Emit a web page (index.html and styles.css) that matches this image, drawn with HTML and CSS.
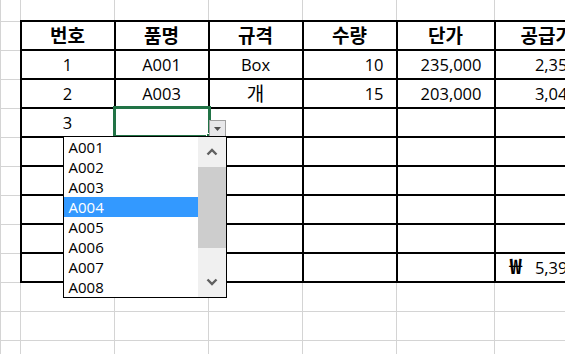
FILE: index.html
```html
<!DOCTYPE html>
<html lang="ko">
<head>
<meta charset="utf-8">
<title>거래명세</title>
<link rel="stylesheet" href="styles.css">
</head>
<body>

<table class="sheet">
	<colgroup>
		<col class="c-a">
		<col class="c-n"><col class="c-n"><col class="c-n"><col class="c-n">
		<col class="c-f">
		<col class="c-g">
	</colgroup>
	<tr class="top"><td></td><td></td><td></td><td></td><td></td><td></td><td></td></tr>
	<tr>
		<td></td>
		<th>번호</th><th>품명</th><th>규격</th><th>수량</th><th>단가</th><th>공급가액</th>
	</tr>
	<tr>
		<td></td>
		<td class="t c">1</td><td class="t c">A001</td><td class="t c">Box</td>
		<td class="t r">10</td><td class="t r">235,000</td><td class="t r g">2,350,000</td>
	</tr>
	<tr>
		<td></td>
		<td class="t c">2</td><td class="t c">A003</td><td class="t c ko">개</td>
		<td class="t r">15</td><td class="t r">203,000</td><td class="t r g">3,045,000</td>
	</tr>
	<tr>
		<td></td>
		<td class="t c">3</td>
		<td class="t active">
			<div class="sel"><span class="handle"></span></div>
			<div class="dd-btn">
				<svg width="7" height="4" viewBox="0 0 7 4"><path d="M0 0h7L3.5 4z" fill="#505050"/></svg>
			</div>
			<div class="list">
				<div class="items">
					<div class="item">A001</div>
					<div class="item">A002</div>
					<div class="item">A003</div>
					<div class="item on">A004</div>
					<div class="item">A005</div>
					<div class="item">A006</div>
					<div class="item">A007</div>
					<div class="item">A008</div>
				</div>
				<div class="scroll">
					<div class="arrow">
						<svg width="12" height="8" viewBox="0 0 12 8"><path d="M1.5 6.5L6 2l4.5 4.5" fill="none" stroke="#606060" stroke-width="2.4"/></svg>
					</div>
					<div class="thumb"></div>
					<div class="track"></div>
					<div class="arrow">
						<svg width="12" height="8" viewBox="0 0 12 8"><path d="M1.5 1.5L6 6l4.5-4.5" fill="none" stroke="#606060" stroke-width="2.4"/></svg>
					</div>
				</div>
			</div>
		</td>
		<td class="t"></td><td class="t"></td><td class="t"></td><td class="t"></td>
	</tr>
	<tr><td></td><td class="t"></td><td class="t"></td><td class="t"></td><td class="t"></td><td class="t"></td><td class="t"></td></tr>
	<tr><td></td><td class="t"></td><td class="t"></td><td class="t"></td><td class="t"></td><td class="t"></td><td class="t"></td></tr>
	<tr><td></td><td class="t"></td><td class="t"></td><td class="t"></td><td class="t"></td><td class="t"></td><td class="t"></td></tr>
	<tr><td></td><td class="t"></td><td class="t"></td><td class="t"></td><td class="t"></td><td class="t"></td><td class="t"></td></tr>
	<tr>
		<td></td><td class="t"></td><td class="t"></td><td class="t"></td><td class="t"></td><td class="t"></td>
		<td class="t g total"><div class="acct"><span class="cur">₩</span><span>5,395,000</span></div></td>
	</tr>
	<tr><td></td><td></td><td></td><td></td><td></td><td></td><td></td></tr>
	<tr><td></td><td></td><td></td><td></td><td></td><td></td><td></td></tr>
	<tr><td></td><td></td><td></td><td></td><td></td><td></td><td></td></tr>
</table>

</body>
</html>
```

FILE: styles.css
```css
html, body {
	margin: 0;
	padding: 0;
	overflow: hidden;
	background: #fff;
}

body {
	font: 16.5px "Open Sans", "Noto Sans CJK KR", sans-serif;
	color: #000;
}

.sheet {
	border-collapse: collapse;
	table-layout: fixed;
	width: 616px;
}

.c-a { width: 20px; }
.c-n { width: 94px; }
.c-f { width: 98px; }
.c-g { width: 122px; }

.sheet tr {
	height: 29px;
}

.sheet tr.top {
	height: 21px;
}

.sheet td,
.sheet th {
	border: 1px solid #d4d4d4;
	padding: 0 12px 3px;
	line-height: 20px;
	vertical-align: bottom;
	white-space: nowrap;
}

.sheet .top td {
	border-top: none;
}

.sheet th {
	border: 2px solid #000;
	padding: 0;
	font-size: 19px;
	font-weight: bold;
	text-align: center;
	vertical-align: middle;
}

.sheet td.t {
	border: 2px solid #000;
}

.c { text-align: center; }
.r { text-align: right; }

.sheet td.g {
	padding-right: 6px;
}

.ko {
	font-size: 19px;
}

.sheet td.total {
	padding-left: 14px;
}

.acct {
	display: flex;
	justify-content: space-between;
	align-items: baseline;
}

.cur {
	font-family: "Noto Sans CJK KR", sans-serif;
	font-size: 21px;
	font-weight: bold;
}

/* active cell + validation dropdown */
.active {
	position: relative;
}

.sel {
	position: absolute;
	left: -3px;
	top: -3px;
	right: -3px;
	bottom: -2px;
	border: 3px solid #217346;
}

.handle {
	position: absolute;
	right: -5px;
	bottom: -5px;
	width: 5px;
	height: 5px;
	background: #217346;
	border: 1px solid #fff;
}

.dd-btn {
	position: absolute;
	right: -18px;
	bottom: -1px;
	width: 17px;
	height: 17px;
	box-sizing: border-box;
	border: 1px solid #a0a0a0;
	background: #e8e8ea;
	display: flex;
	align-items: center;
	justify-content: center;
	z-index: 2;
}

.list {
	position: absolute;
	left: -53px;
	top: 100%;
	width: 164px;
	height: 162px;
	box-sizing: border-box;
	border: 1px solid #000;
	background: #fff;
	display: flex;
	z-index: 3;
}

.items {
	flex: 1;
}

.item {
	font-size: 15px;
	line-height: 20px;
	height: 20px;
	padding-left: 5px;
	text-align: left;
}

.item.on {
	background: #3399ff;
	color: #fff;
}

.scroll {
	width: 28px;
	background: #f0f0f0;
	display: flex;
	flex-direction: column;
}

.arrow {
	height: 30px;
	display: flex;
	align-items: center;
	justify-content: center;
}

.thumb {
	height: 81px;
	background: #cdcdcd;
}

.track {
	flex: 1;
}
```
